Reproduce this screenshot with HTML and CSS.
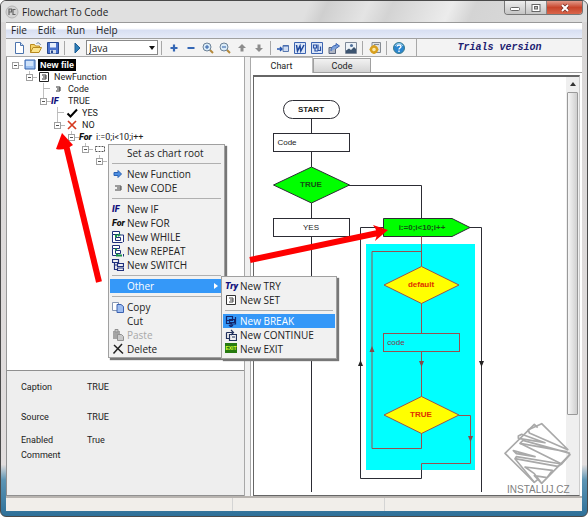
FILE: index.html
```html
<!DOCTYPE html>
<html lang="en">
<head>
<meta charset="utf-8">
<title>Flowchart To Code</title>
<link rel="stylesheet" href="styles.css">
</head>
<body>
<div class="window">
  <header class="titlebar">
    <svg class="app-icon" width="14" height="14" viewBox="0 0 14 14"><circle cx="7" cy="7" r="6" fill="#d4d4d4" stroke="#b4b4b4"/><path d="M4 10V4h2.500v3H4M10.500 4.500H8v5h2.500" fill="none" stroke="#666" stroke-width="1.200"/></svg>
    <h1>Flowchart To Code</h1>
    <div class="window-buttons">
      <button class="wb min" aria-label="Minimize"><svg width="12" height="10" viewBox="0 0 12 10"><rect x="1.500" y="4.500" width="9" height="3" rx="1" fill="#fff" stroke="#666"/></svg></button>
      <button class="wb max" aria-label="Maximize"><svg width="12" height="10" viewBox="0 0 12 10"><rect x="2" y="1.500" width="8" height="7" fill="#fff" stroke="#666"/><rect x="4.500" y="3.500" width="3" height="2.500" fill="#bbb" stroke="#666"/></svg></button>
      <button class="wb close" aria-label="Close"><svg width="12" height="10" viewBox="0 0 12 10"><path d="M3 2l6 6M9 2L3 8" stroke="#7a3028" stroke-width="3.600"/><path d="M3 2l6 6M9 2L3 8" stroke="#fff" stroke-width="2"/></svg></button>
    </div>
  </header>

  <div class="client">
    <nav class="menubar">
      <button>File</button><button>Edit</button><button>Run</button><button>Help</button>
    </nav>

    <div class="toolbar">
      <button class="tool" aria-label="New"><svg viewBox="0 0 12 12"><path d="M2.500 .5h5l3 3v8h-8z" fill="#fff" stroke="#4c74ae"/><path d="M7.500 .5v3h3" fill="#cfe0f4" stroke="#4c74ae"/></svg></button>
      <button class="tool" aria-label="Open"><svg viewBox="0 0 12 12"><path d="M.5 10.500v-8h4l1 1.500h4v2" fill="#f5d46a" stroke="#b88a20"/><path d="M.5 10.500l2.500-5h8.500l-2.500 5z" fill="#fbe48c" stroke="#b88a20"/><path d="M6.500 1.500c2-1.500 3.500 0 4 1.500" fill="none" stroke="#5d7b9c"/></svg></button>
      <button class="tool" aria-label="Save"><svg viewBox="0 0 12 12"><path d="M.5 .5h11v11h-11z" fill="#4a72cc" stroke="#25478f"/><path d="M3 1h6v4.500H3z" fill="#e8f0fc"/><path d="M3 8h6v3.500H3z" fill="#d2dcec"/><path d="M4 8.500h2v2.500H4z" fill="#25478f"/></svg></button>
      <span class="sep"></span>
      <button class="tool" aria-label="Run"><svg viewBox="0 0 12 12"><path d="M4 1l5 5-5 5z" fill="#2e7fb8" stroke="#1d5c94"/></svg></button>
      <label class="lang"><select aria-label="Language"><option>Java</option></select></label>
      <span class="sep"></span>
      <button class="tool" aria-label="Expand"><svg viewBox="0 0 12 12"><path d="M6 2.500v7M2.500 6h7" stroke="#3567b5" stroke-width="2.200"/></svg></button>
      <button class="tool" aria-label="Collapse"><svg viewBox="0 0 12 12"><path d="M2.500 6h7" stroke="#3567b5" stroke-width="2"/></svg></button>
      <button class="tool" aria-label="Zoom in"><svg viewBox="0 0 12 12"><path d="M7.500 7.500l3.500 3.500" stroke="#b58a3c" stroke-width="2"/><circle cx="5" cy="5" r="4" fill="#d9ebf8" stroke="#6d8298"/><path d="M5 3v4M3 5h4" stroke="#2c5ca8"/></svg></button>
      <button class="tool" aria-label="Zoom out"><svg viewBox="0 0 12 12"><path d="M7.500 7.500l3.500 3.500" stroke="#b58a3c" stroke-width="2"/><circle cx="5" cy="5" r="4" fill="#d9ebf8" stroke="#6d8298"/><path d="M3 5h4" stroke="#2c5ca8"/></svg></button>
      <button class="tool" aria-label="Move up"><svg viewBox="0 0 12 12"><path d="M6 2l4 4H7.500v3.500h-3V6H2z" fill="#8c8c8c"/></svg></button>
      <button class="tool" aria-label="Move down"><svg viewBox="0 0 12 12"><path d="M6 10l4-4H7.500V2.500h-3V6H2z" fill="#8c8c8c"/></svg></button>
      <span class="sep"></span>
      <button class="tool" aria-label="Insert"><svg viewBox="0 0 12 12"><path d="M0 7h4.500M3 5l2 2-2 2" fill="none" stroke="#2455b0" stroke-width="1.400"/><path d="M6 3.500h5.500v6H6z" fill="#cfdcf2" stroke="#5878b0"/><path d="M6 4h5.500" stroke="#3a62ac"/></svg></button>
      <button class="tool" aria-label="Export to Word"><svg viewBox="0 0 12 12"><path d="M.5 .5h11v11H.5z" fill="#dbe6f8" stroke="#3c64b0"/><path d="M2.500 3l1 6 2.500-5 .8 5L10 3" fill="none" stroke="#1f489c" stroke-width="1.500"/></svg></button>
      <button class="tool" aria-label="Export to Visio"><svg viewBox="0 0 12 12"><path d="M.5 .5h11v11H.5z" fill="#dbe6f8" stroke="#3c64b0"/><path d="M2.500 3h3v3h-3zM7 2.500v6M7 8.500h2.500v-4M4 6v3h3" fill="none" stroke="#2a52a6" stroke-width="1.200"/></svg></button>
      <button class="tool" aria-label="Export"><svg viewBox="0 0 12 12"><path d="M1 5.500h6.500v6H1z" fill="#b0b6c4" stroke="#59657c"/><path d="M3 9c0-4 2-5.500 5-5.500V1.500L11.500 4 8 6.500" fill="#7da2dc" stroke="#3c64b0"/></svg></button>
      <button class="tool" aria-label="Export image"><svg viewBox="0 0 12 12"><path d="M.5 .5h11v11H.5z" fill="#eef3f8" stroke="#7d8898"/><path d="M1 11V8.500l3-2 2 1.500 3-3 2 2v4z" fill="#3c5470"/><circle cx="6.500" cy="3.500" r="1.500" fill="#51729c"/></svg></button>
      <span class="sep"></span>
      <button class="tool" aria-label="Options"><svg viewBox="0 0 12 12"><path d="M3 .5h8.500v10H3z" fill="#dfe2e6" stroke="#858b92"/><path d="M5 2.500h5" stroke="#858b92"/><circle cx="5" cy="7.500" r="3" fill="#fbe9a8" stroke="#d8a020" stroke-width="2.400"/><path d="M5 3v1.500M5 10.500V12M.5 7.500H2M8 7.500h1.500" stroke="#d8a020" stroke-width="1.600"/></svg></button>
      <span class="sep"></span>
      <button class="tool" aria-label="Help"><svg viewBox="0 0 12 12"><circle cx="6" cy="6" r="5.500" fill="#2b86cf" stroke="#397a8c"/><path d="M2 4a4.500 4.500 0 0 1 8 0" fill="none" stroke="#9ed4f4"/><path d="M4 4.500c.3-2 4-2 4 0C8 6 6 6 6 7.500M6 8.500V10" fill="none" stroke="#fff" stroke-width="1.400"/></svg></button>
      <div class="trial">Trials version</div>
    </div>

    <main class="workspace">
      <section class="sidebar">
        <div class="tree">
          <ul class="root">
            <li><div class="node"><i class="box"></i><svg class="ico" viewBox="0 0 12 12"><path d="M1 1h10v9H1z" fill="#9cc0f0" stroke="#3463ac"/><path d="M2 2h7v5H2z" fill="#cfe2fa"/></svg><strong class="selected">New file</strong></div>
              <ul>
                <li><div class="node"><i class="box"></i><svg class="ico" viewBox="0 0 12 12"><path d="M1.500 1.500h9v9h-9z" fill="#fff" stroke="#222"/><path d="M4 4h4v4H4M5 6h3" fill="none" stroke="#333"/></svg>NewFunction</div>
                  <ul>
                    <li><div class="node"><i class="dash"></i><svg class="ico" viewBox="0 0 12 12"><path d="M4 4h4v4H4M5 6h3" fill="none" stroke="#333"/></svg>Code</div></li>
                    <li><div class="node"><i class="box"></i><b class="glyph navy">IF</b>TRUE</div>
                      <ul>
                        <li><div class="node"><i class="dash"></i><svg class="ico" viewBox="0 0 12 12"><path d="M1.500 6.500L4.500 9.500 11 2.500" fill="none" stroke="#000" stroke-width="2"/></svg>YES</div></li>
                        <li><div class="node"><i class="box"></i><svg class="ico" viewBox="0 0 12 12"><path d="M2 2l8 8M10 2l-8 8" stroke="#d63a20" stroke-width="1.700"/></svg>NO</div>
                          <ul>
                            <li><div class="node"><i class="box"></i><b class="glyph">For</b>i:=0;i&lt;10;i++</div>
                              <ul>
                                <li><div class="node"><i class="box"></i><svg class="ico" viewBox="0 0 12 12"><path d="M1.500 3.500h9v5h-9z" fill="#fff" stroke="#555" stroke-dasharray="2 1"/></svg></div>
                                  <ul><li><div class="node"><i class="box"></i></div></li></ul>
                                </li>
                              </ul>
                            </li>
                          </ul>
                        </li>
                      </ul>
                    </li>
                  </ul>
                </li>
              </ul>
            </li>
          </ul>
        </div>
        <dl class="props">
          <dt>Caption</dt><dd>TRUE</dd>
          <dt>Source</dt><dd>TRUE</dd>
          <dt>Enabled</dt><dd>True</dd>
          <dt>Comment</dt><dd></dd>
        </dl>
      </section>

      <section class="viewer">
        <div class="tabs" role="tablist">
          <button role="tab" class="tab active" aria-selected="true">Chart</button><button role="tab" class="tab" aria-selected="false">Code</button>
        </div>
        <div class="canvas">
          <div class="chart">
            <svg width="312" height="415" viewBox="254 77 312 415">
              <rect x="366" y="244" width="109" height="226" fill="#00ffff"/>
              <g class="wire">
                <path d="M311.500 118.500V133.500M311.500 151.500V167M311.500 203V218.500M311.500 236.500V492"/>
                <path d="M349 185.500H421.500V218.500"/>
                <path d="M383.500 227.500H360.500V478.500H421.500V470M470 227.500H481.500V492"/>
                <rect x="283.500" y="100.500" width="56" height="18" rx="9" fill="#fff"/>
                <rect x="273.500" y="133.500" width="76" height="18" fill="#fff"/>
                <rect x="273.500" y="218.500" width="76" height="18" fill="#fff"/>
                <path d="M273.500 185L311.500 167L349.500 185L311.500 203Z" class="green"/>
                <path d="M383.500 218.500H452L470 227.500L452 236.500H383.500Z" class="green"/>
              </g>
              <g class="loop">
                <path d="M421.500 236.500V266M421.500 303V333.500M421.500 351.500V397M421.500 433V448.500H372V251.500H421.500"/>
                <path d="M459 415.500H470.500V463.500H421.500V470"/>
                <path d="M384 285L421.500 266.500L459 285L421.500 303.500Z" class="yellow"/>
                <path d="M384 415L421.500 396.500L459 415L421.500 433.500Z" class="yellow"/>
                <rect x="383.500" y="333.500" width="76" height="18"/>
              </g>
              <path d="M358 366h5l-2.500-6zM479 361h5l-2.500 6z" fill="#222"/>
              <path d="M369.500 352h5l-2.500-6zM419 361h5l-2.500 6zM468 436h5l-2.500 6z" fill="#884848"/>
              <g class="labels">
                <text x="311" y="112" class="b">START</text>
                <text x="287" y="145">Code</text>
                <text x="311" y="187" class="b on-green">TRUE</text>
                <text x="311" y="230">YES</text>
                <text x="422" y="230" class="b on-green">i:=0;i&lt;10;i++</text>
                <text x="421" y="287" class="b red">default</text>
                <text x="396" y="345" class="maroon">code</text>
                <text x="421" y="417" class="b red">TRUE</text>
              </g>
            </svg>
          </div>
          <div class="scroll"><span class="up"></span><span class="thumb"></span></div>
        </div>
      </section>
    </main>

    <footer class="status"><span class="cell"></span><span class="cell mid"></span><span class="cell end"></span></footer>
  </div>

  <svg class="arrows" width="588" height="517" viewBox="0 0 588 517">
    <path d="M99 282L66 145" stroke="#fe0000" stroke-width="6" fill="none"/>
    <path d="M62 133L56 149Q64 151 73 145Z" fill="#fe0000"/>
    <path d="M250 260L378 233" stroke="#fe0000" stroke-width="6" fill="none"/>
    <path d="M388 230L373 225Q379 232 375 241Z" fill="#fe0000"/>
  </svg>

  <svg class="watermark" width="76" height="76" viewBox="0 0 228 228">
    <g fill="none" stroke="#a9a9a9" stroke-width="5" stroke-linejoin="round">
      <path d="M122 187L100 164L138 170L154 148L72 138L100 158L122 187L207 100L196 92L57 67L66 58L207 97"/>
      <path d="M100 184L12 97L100 10L110 20"/>
      <path d="M202 87L122 8L82 26L85 36L202 87"/>
      <path d="M52 45L62 40L132 65L52 52Z"/>
      <path d="M57 67L182 129L207 100"/>
      <path d="M37 89L102 107L46 98Z"/>
      <path d="M182 129L46 107L42 113L170 136L182 129"/>
      <path d="M42 113L100 184L110 176"/>
    </g>
    <text x="18" y="216">INSTALUJ.CZ</text>
  </svg>

  <div class="menu context" role="menu">
    <button role="menuitem">Set as chart root</button>
    <hr>
    <button role="menuitem"><svg viewBox="0 0 12 12"><path d="M2 4.500h4V2.500L9.500 6 6 9.500V7.500H2z" fill="#4b8de0" stroke="#2a62b4"/></svg>New Function</button>
    <button role="menuitem"><svg viewBox="0 0 12 12"><path d="M3 4h6v4H3M5 6h4" fill="none" stroke="#444"/></svg>New CODE</button>
    <hr>
    <button role="menuitem"><b class="glyph navy">IF</b>New IF</button>
    <button role="menuitem"><b class="glyph">For</b>New FOR</button>
    <button role="menuitem"><svg viewBox="0 0 12 12"><path d="M.5 .5h7v3h-7zM3.500 6.500h5v3h-5zM.5 3.500v8h10M11.500 11V4H8" fill="#fff" stroke="#20307c"/><path d="M4 3.500v3M6 5l2-2" stroke="#189048" stroke-width="2"/></svg>New WHILE</button>
    <button role="menuitem"><svg viewBox="0 0 12 12"><path d="M.5 .5h7v3h-7zM3.500 5.500h5v3h-5zM.5 3.500v7h5M11.500 11.500V9" fill="#fff" stroke="#20307c"/><path d="M5 8.500v2h5M4 3.500v2" fill="none" stroke="#189048" stroke-width="2"/></svg>New REPEAT</button>
    <button role="menuitem"><svg viewBox="0 0 12 12"><path d="M.5 .5h6v3h-6zM5.500 4.500h6v3h-6zM5.500 9h6v2.500h-6zM2.500 3.500v7h3M2.500 6h3" fill="none" stroke="#20307c" stroke-width="1.200"/></svg>New SWITCH</button>
    <hr>
    <button role="menuitem" class="hot parent">Other</button>
    <hr>
    <button role="menuitem"><svg viewBox="0 0 12 12"><path d="M.5 1.500h6v8h-6z" fill="#fff" stroke="#8797b4"/><path d="M5 3.500h4l2.500 2v6H5z" fill="#9dbcf0" stroke="#3c62b0"/></svg>Copy</button>
    <button role="menuitem">Cut</button>
    <button role="menuitem" disabled><svg viewBox="0 0 12 12"><path d="M1 2h7v8H1z" fill="#a4a4a4"/><path d="M3 .5h3V3H3zM5.500 5.500h4l2 2v4h-6z" fill="#c8c8c8" stroke="#909090"/></svg>Paste</button>
    <button role="menuitem"><svg viewBox="0 0 12 12"><path d="M2 2l9 8.500M10 1L1.500 10.500" stroke="#222" stroke-width="1.500"/></svg>Delete</button>
  </div>

  <div class="menu submenu" role="menu">
    <button role="menuitem"><b class="glyph navy">Try</b>New TRY</button>
    <button role="menuitem"><svg viewBox="0 0 12 12"><path d="M1.500 1.500h9v9h-9z" fill="#fff" stroke="#333"/><path d="M4 4h4v4H4M5 6h3" fill="none" stroke="#444"/></svg>New SET</button>
    <hr>
    <button role="menuitem" class="hot"><svg viewBox="0 0 12 12"><path d="M1.500 1.500h6v4h-6zM4.500 4.500h5v3h-5zM1.500 5.500v3H7M10.500 2v7H6v3M4 10l2 2 2-2" fill="none" stroke="#14266c" stroke-width="1.200"/></svg>New BREAK</button>
    <button role="menuitem"><svg viewBox="0 0 12 12"><path d="M1.500 3.500h6M1.500 3.500v6H4M4.500 5.500h7v6h-7zM7 8h3M6 1l2.500 2.500L6 6" fill="none" stroke="#20305c" stroke-width="1.200"/></svg>New CONTINUE</button>
    <button role="menuitem"><b class="exit">EXIT</b>New EXIT</button>
  </div>
</div>
</body>
</html>
```
FILE: styles.css
```css
* { box-sizing: border-box; }
body { margin: 0; font-family: "Open Sans", "Noto Sans", sans-serif; font-size: 10px; color: #222; }
button, select { font: inherit; color: inherit; }
button { border: 0; padding: 0; background: none; }
ul { list-style: none; margin: 0; padding: 0; }

.window {
  position: relative;
  display: flex;
  flex-direction: column;
  min-height: 100vh;
  padding: 0 5px 5px;
  overflow: hidden;
  border: 1px solid #4a4a4a;
  border-radius: 6px;
  background: linear-gradient(#d8d6d6, #e2dede 90%, #5d95b4 93%, #2e7099);
}
.titlebar {
  display: flex;
  align-items: center;
  height: 21px;
  margin: 0 -5px;
  padding-left: 4px;
  background: linear-gradient(115deg, #e0e0e0 52%, #cfcfcf 55%, #e4e4e4 62%, #d3d3d3 66%, #ececec 76%, #d4d4d4 80%, #dedede);
}
.titlebar h1 { flex: 1; margin: 0 0 0 3px; font-size: 10px; font-weight: 400; line-height: 14px; color: #222; }
.window-buttons { display: flex; align-self: flex-start; margin-right: 4px; border: 1px solid #777; border-top: 0; border-radius: 0 0 4px 4px; overflow: hidden; }
.wb { display: flex; align-items: center; justify-content: center; width: 21px; height: 13px; border-right: 1px solid #888; background: linear-gradient(#eee, #c4c4c4); }
.wb.close { width: 35px; border: 0; background: linear-gradient(#e39a8a, #c8452c 50%, #d9654a); }

.client { flex: 1; display: flex; flex-direction: column; border-top: 1px solid #999; background: #f0f0f0; }
.menubar { display: flex; gap: 11px; height: 16px; padding-left: 5px; line-height: 15px; background: linear-gradient(#fff 35%, #d8dff2 50%, #e6ebf8); border-bottom: 1px solid #a0a0a0; }
.toolbar { display: flex; align-items: center; height: 18px; padding-left: 4px; border-bottom: 1px solid #a8a8a8; background: #f3f3f3; }
.tool { display: flex; align-items: center; justify-content: center; width: 17px; height: 17px; }
.tool svg, .menu svg, .ico { width: 12px; height: 12px; }
.sep { width: 1px; height: 14px; margin: 0 3px; background: #a8a8a8; }
.lang { position: relative; margin-left: 1px; }
.lang select { display: block; width: 72px; height: 15px; padding: 0 2px; appearance: none; border: 1px solid #888; border-radius: 0; background: #fff; line-height: 12px; }
.lang::after { content: ""; position: absolute; right: 3px; top: 6px; border: 3px solid transparent; border-top: 4px solid #111; border-bottom: 0; }
.trial { flex: 1; align-self: stretch; margin-left: 9px; border-left: 1px solid #a8a8a8; text-align: center; font: italic bold 10px/17px "Liberation Mono", monospace; color: #202070; }

.workspace { flex: 1; display: flex; gap: 5px; min-height: 0; }
.sidebar { flex: 0 0 239px; display: flex; flex-direction: column; border-right: 1px solid #a8a8a8; font: 9px/12px Roboto, sans-serif; }
.tree { flex: 1; padding: 2px 0 0 4px; background: #fff; border-left: 1px solid #999; }
.tree ul ul { padding-left: 14px; }
.tree li { position: relative; }
.tree ul ul > li::before { content: ""; position: absolute; left: 4px; top: 0; bottom: 0; border-left: 1px solid #c0c0c0; }
.tree ul ul > li:last-child::before { bottom: auto; height: 6px; }
.node { position: relative; display: flex; align-items: center; height: 12px; white-space: nowrap; }
.box { position: relative; width: 7px; height: 7px; margin: 0 1px; border: 1px solid #a0a0a0; background: linear-gradient(#555, #555) center / 3px 1px no-repeat #fff; }
.box::after, .dash::after { content: ""; position: absolute; left: 6px; top: 2px; width: 4px; border-top: 1px solid #b8b8b8; }
.dash { position: relative; width: 9px; height: 6px; }
.dash::after { left: 4px; width: 7px; }
.ico, .node .glyph { flex: none; width: 14px; margin: 0 3px 0 3px; }
.glyph { font: italic 900 9px/12px Roboto, sans-serif; color: #111; }
.glyph.navy { color: #10107c; }
.selected { padding: 0 2px; margin-left: -2px; background: #000; color: #fff; font: bold 9px/12px "Liberation Sans", sans-serif; }

.props { display: grid; grid-template: 30px 23px 15px 46px / 66px 1fr; margin: 0; padding: 10px 0 0 14px; border: 1px solid #909090; border-right: 0; background: #eee; }
.props dd { margin: 0; }

.viewer { flex: 1; display: flex; flex-direction: column; min-width: 0; border-left: 1px solid #aaa; background: #fff; }
.tabs { display: flex; align-items: flex-end; height: 16px; border-bottom: 1px solid #a0a0a0; font: 9px/12px Roboto, sans-serif; }
.tab { width: 58px; height: 14px; border: 1px solid #a0a0a0; border-bottom: 0; background: linear-gradient(#f2f2f2, #d4d4d4); }
.tab.active { width: 62px; height: 16px; border-color: #bbb; border-left: 0; background: #fff; margin-bottom: -1px; }
.canvas { flex: 1; display: flex; min-height: 0; margin: 2px 2px 0 2px; border: 1px solid #666; border-width: 2px 1px 1px 1px; border-right-color: #ccc; }
.chart { flex: 1; min-width: 0; overflow: hidden; }
.chart svg { display: block; }
.scroll { display: flex; flex-direction: column; align-items: center; width: 13px; background: #efefef; }
.up { width: 6px; margin: 5px 0 6px; border: 3px solid transparent; border-top: 0; border-bottom: 4px solid #333; }
.thumb { width: 11px; height: 323px; border: 1px solid #999; border-radius: 1px; background: linear-gradient(90deg, #f6f6f6, #cfcfcf); }

.wire { fill: none; stroke: #2c2c34; }
.loop { fill: none; stroke: #985050; }
.green { fill: #00ff00; }
.yellow { fill: #ffff00; }
.labels { font: 8px "Liberation Sans", sans-serif; fill: #222; text-anchor: middle; }
.b { font-weight: bold; }
.on-green { fill: #145014; }
.red { fill: #e03000; }
.maroon { fill: #803848; }

.status { display: flex; height: 15px; border-top: 2px solid #b8b4b0; background: #f1eeea; }
.cell { flex: 0 0 227px; border-right: 1px solid #d4d4d4; }
.cell.mid { flex-basis: 152px; }
.cell.end { flex: 1; border: 0; }

.arrows { position: absolute; left: -1px; top: -1px; pointer-events: none; }
.watermark { position: absolute; right: 10px; bottom: 19px; }
.watermark text { font: 30px "Liberation Sans", sans-serif; fill: #808080; }

.menu { position: absolute; display: flex; flex-direction: column; padding: 1px; border: 1px solid #a0a0a0; background: #f1f1f1; box-shadow: 2px 2px 1px #777; }
.context { left: 107px; top: 143px; width: 117px; }
.submenu { left: 220px; top: 275px; width: 116px; padding: 2px 1px; }
.menu button { position: relative; display: flex; align-items: center; height: 14px; padding-left: 17px; line-height: 14px; text-align: left; white-space: nowrap; }
.menu button > svg, .menu button > b { position: absolute; left: 2px; top: 1px; }
.menu hr { width: calc(100% - 4px); height: 1px; margin: 3px 2px; border: 0; background: #b0b0b0; }
.menu .hot { background: #3598f8; color: #fff; }
.menu button:disabled { color: #a8a8a8; }
.parent::after { content: ""; position: absolute; right: 5px; top: 4px; border: 3px solid transparent; border-left: 4px solid #fff; border-right: 0; }
.exit { width: 12px; height: 10px; overflow: hidden; background: #267a10; color: #d8ff30; font: bold 5px/10px "Liberation Sans", sans-serif; text-align: center; }
```
